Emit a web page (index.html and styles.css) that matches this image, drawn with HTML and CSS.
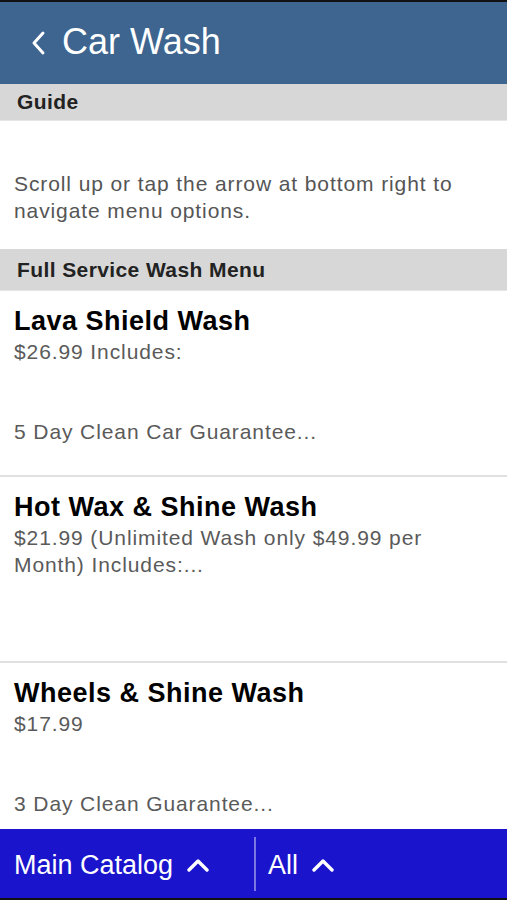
FILE: index.html
```html
<!DOCTYPE html>
<html>
<head>
<meta charset="utf-8">
<link rel="stylesheet" href="styles.css">
</head>
<body>
<div class="app">
  <header class="topbar">
    <svg class="back" width="16" height="26" viewBox="0 0 16 26"><path d="M12 3 L3 13 L12 23" fill="none" stroke="#fff" stroke-width="3" stroke-linecap="round" stroke-linejoin="round"/></svg>
    <h1 class="title">Car Wash</h1>
  </header>
  <main class="content">
    <div class="section-head guide-head">Guide</div>
    <div class="guide">Scroll up or tap the arrow at bottom right to navigate menu options.</div>
    <div class="section-head menu-head">Full Service Wash Menu</div>
    <div class="item">
      <div class="item-title">Lava Shield Wash</div>
      <div class="item-price">$26.99 Includes:</div>
      <div class="item-desc">5 Day Clean Car Guarantee...</div>
    </div>
    <div class="item">
      <div class="item-title">Hot Wax &amp; Shine Wash</div>
      <div class="item-price">$21.99 (Unlimited Wash only $49.99 per Month) Includes:...</div>
    </div>
    <div class="item">
      <div class="item-title">Wheels &amp; Shine Wash</div>
      <div class="item-price">$17.99</div>
      <div class="item-desc">3 Day Clean Guarantee...</div>
    </div>
  </main>
  <footer class="bottombar">
    <div class="tab tab-main">Main Catalog
      <svg class="up" width="22" height="14" viewBox="0 0 22 14"><path d="M2 12 L11 3 L20 12" fill="none" stroke="#fff" stroke-width="3.4" stroke-linecap="round" stroke-linejoin="round"/></svg>
    </div>
    <div class="divider"></div>
    <div class="tab tab-all">All
      <svg class="up" width="22" height="14" viewBox="0 0 22 14"><path d="M2 12 L11 3 L20 12" fill="none" stroke="#fff" stroke-width="3.4" stroke-linecap="round" stroke-linejoin="round"/></svg>
    </div>
  </footer>
</div>
</body>
</html>
```

FILE: styles.css
```css
* { box-sizing: border-box; }
html, body { margin: 0; padding: 0; }
body {
  font-family: "Liberation Sans", Arial, sans-serif;
  background: #fff;
}
.app {
  width: 507px;
  height: 900px;
  display: flex;
  flex-direction: column;
  overflow: hidden;
}
.topbar {
  flex: 0 0 84px;
  background: #3d6590;
  border-top: 2px solid #111;
  display: flex;
  align-items: center;
  padding-left: 31px;
  padding-bottom: 2px;
}
.back { margin-right: 15px; margin-top: 2px; }
.title {
  margin: 0;
  color: #fff;
  font-weight: 400;
  font-size: 36px;
  letter-spacing: 0;
}
.content {
  flex: 1 1 auto;
  overflow: hidden;
}
.section-head {
  background: #d7d7d7;
  color: #222;
  font-size: 21px;
  font-weight: 700;
  letter-spacing: 0.4px;
  padding-left: 17px;
  display: flex;
  align-items: center;
}
.guide-head { height: 37px; border-bottom: 1px solid #e6e6e6; }
.menu-head { height: 42px; border-bottom: 1px solid #e6e6e6; }
.guide {
  height: 128px;
  padding: 49px 30px 0 14px;
  font-size: 21px;
  letter-spacing: 0.9px;
  line-height: 27px;
  color: #555;
}
.item {
  height: 186px;
  padding: 13px 14px 0 14px;
  border-bottom: 2px solid #e0e0e0;
}
.item-title {
  font-size: 27px;
  font-weight: 700;
  letter-spacing: 0.5px;
  color: #000;
  line-height: 34px;
}
.item-price {
  font-size: 21px;
  letter-spacing: 0.9px;
  color: #5a5a5a;
  line-height: 27px;
  padding-right: 30px;
}
.item-desc {
  font-size: 21px;
  letter-spacing: 0.9px;
  color: #5a5a5a;
  line-height: 27px;
  margin-top: 53px;
}
.bottombar {
  flex: 0 0 71px;
  background: #1a14cc;
  border-bottom: 2px solid #111;
  display: flex;
  align-items: center;
  padding-top: 4px;
}
.tab {
  color: #fff;
  font-size: 27px;
  display: flex;
  align-items: center;
  height: 100%;
}
.tab-main { padding-left: 14px; width: 254px; }
.tab-all { padding-left: 12px; }
.up { margin-left: 14px; margin-top: -2px; }
.divider {
  width: 2px;
  height: 54px;
  margin-top: -4px;
  background: #7b78e3;
}
```
